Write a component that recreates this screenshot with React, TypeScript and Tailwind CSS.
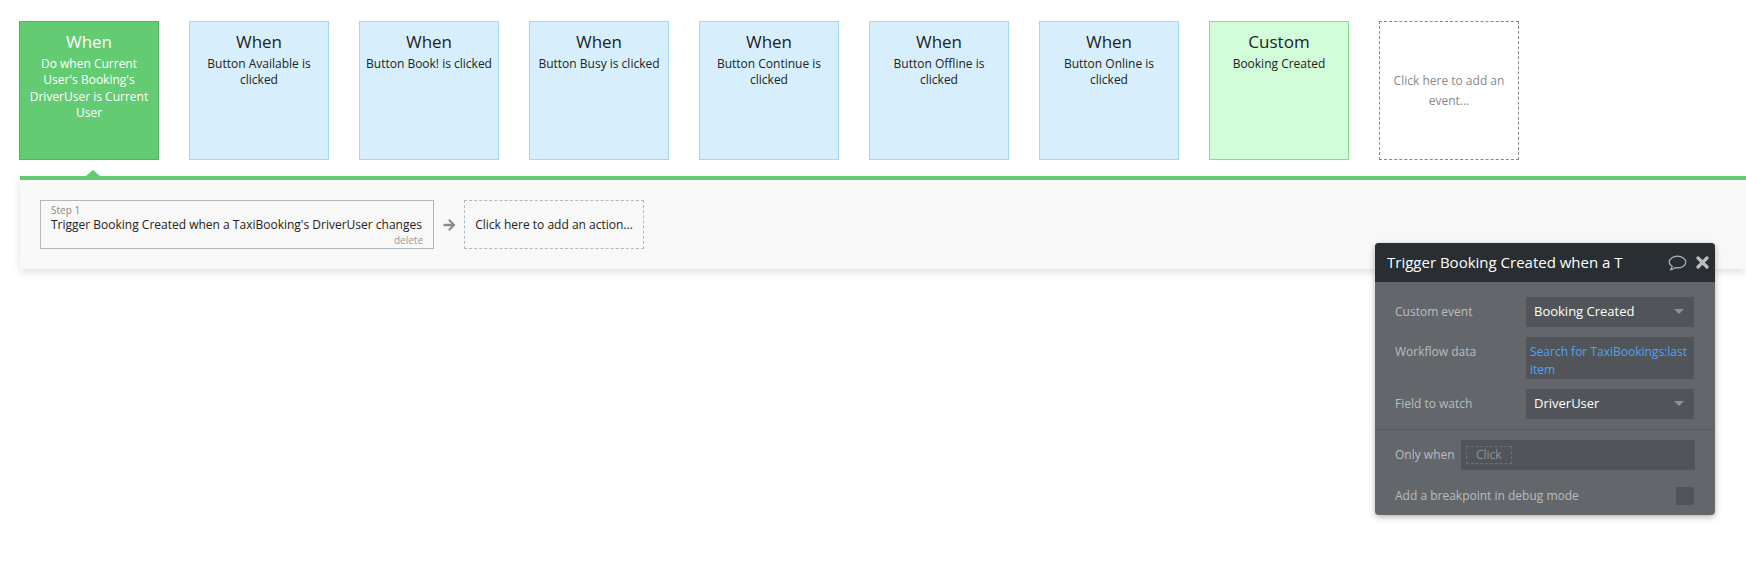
import React from 'react';

type EventBox = {
  kind: 'active' | 'button' | 'custom';
  title: string;
  text: string;
};

const events: EventBox[] = [
  { kind: 'active', title: 'When', text: "Do when Current User's Booking's DriverUser is Current User" },
  { kind: 'button', title: 'When', text: 'Button Available is clicked' },
  { kind: 'button', title: 'When', text: 'Button Book! is clicked' },
  { kind: 'button', title: 'When', text: 'Button Busy is clicked' },
  { kind: 'button', title: 'When', text: 'Button Continue is clicked' },
  { kind: 'button', title: 'When', text: 'Button Offline is clicked' },
  { kind: 'button', title: 'When', text: 'Button Online is clicked' },
  { kind: 'custom', title: 'Custom', text: 'Booking Created' },
];

const boxStyles: Record<EventBox['kind'], string> = {
  active: 'bg-[#63cb72] border-[#4fb45e] text-white',
  button: 'bg-[#d7effc] border-[#9fd7f8] text-[#222]',
  custom: 'bg-[#d1fdd8] border-[#80dd8c] text-[#222]',
};

const Caret = () => (
  <svg width="10" height="6" viewBox="0 0 10 6" className="shrink-0">
    <path d="M0 0 L10 0 L5 5 Z" fill="#8c9195" />
  </svg>
);

const ArrowRight = () => (
  <svg width="13" height="12" viewBox="0 0 448 448" className="shrink-0">
    <path
      fill="#8a8a8a"
      d="M190 30 L222 0 L448 224 L222 448 L190 418 C178 406 178 386 190 374 L292 272 L32 272 C14 272 0 258 0 240 L0 208 C0 190 14 176 32 176 L292 176 L190 74 C178 62 178 42 190 30 Z"
    />
  </svg>
);

const CommentIcon = () => (
  <svg width="19" height="16" viewBox="0 0 19 16" className="shrink-0">
    <path
      d="M9.5 1.2 C4.9 1.2 1.2 3.9 1.2 7 C1.2 8.8 2.4 10.3 4.2 11.3 C4 12.6 3.3 13.8 2.4 14.8 C4.3 14.6 5.9 13.8 7 12.7 C7.8 12.8 8.6 12.9 9.5 12.9 C14.1 12.9 17.8 10.2 17.8 7 C17.8 3.9 14.1 1.2 9.5 1.2 Z"
      fill="none"
      stroke="#aeb3b7"
      strokeWidth="1.2"
      strokeLinejoin="round"
    />
  </svg>
);

const CloseIcon = () => (
  <svg width="13" height="13" viewBox="0 0 13 13" className="shrink-0">
    <path d="M2 2 L11 11 M11 2 L2 11" stroke="#bcc0c3" strokeWidth="3.2" strokeLinecap="round" />
  </svg>
);

export default function App() {
  return (
    <div
      className="relative w-[1746px] h-[577px] bg-white overflow-hidden text-[#333]"
      style={{ fontFamily: '"Open Sans", "Liberation Sans", sans-serif' }}
    >
      {/* event row */}
      <div className="flex gap-[30px] pl-[19px] pt-[21px]">
        {events.map((e, i) => (
          <div
            key={i}
            className={`w-[140px] h-[139px] border px-[6px] pt-[7px] text-center ${boxStyles[e.kind]}`}
          >
            <div className="text-[17px] leading-[26px]">{e.title}</div>
            <div className="text-[12px] leading-[16.3px] mt-[1px]">{e.text}</div>
          </div>
        ))}
        <div className="w-[140px] h-[139px] border border-dashed border-[#888] flex items-center justify-center px-[12px] text-center">
          <div className="text-[12px] leading-[20px] text-[#888]">Click here to add an event...</div>
        </div>
      </div>

      {/* action panel */}
      <div className="relative ml-[20px] mt-[16px] h-[93px] border-t-4 border-[#62cb71] bg-[#f8f8f8] shadow-[0_3px_8px_rgba(0,0,0,0.13)]">
        <div className="absolute left-[66px] -top-[10px] w-0 h-0 border-l-[7px] border-r-[7px] border-b-[6px] border-l-transparent border-r-transparent border-b-[#62cb71]" />
        <div className="flex items-center pl-[20px] pt-[20px]">
          <div className="w-[394px] h-[49px] border border-[#b0b8c0] px-[10px] pt-[3px] bg-[#f8f8f8]">
            <div className="text-[10px] leading-[12px] text-[#888]">Step 1</div>
            <div className="text-[12px] leading-[18px] text-[#222] whitespace-nowrap">
              Trigger Booking Created when a TaxiBooking's DriverUser changes
            </div>
            <div className="text-[10px] leading-[12px] text-[#999] text-right">delete</div>
          </div>
          <div className="w-[30px] flex justify-center">
            <ArrowRight />
          </div>
          <div className="w-[180px] h-[49px] border border-dashed border-[#b5b9bd] flex items-center justify-center">
            <span className="text-[12px] text-[#222]">Click here to add an action...</span>
          </div>
        </div>
      </div>

      {/* property editor window */}
      <div className="absolute left-[1375px] top-[243px] w-[340px] rounded-[4px] bg-[#63676b] shadow-[0_2px_6px_rgba(0,0,0,0.3)] overflow-hidden">
        <div className="h-[39px] bg-[#282e31] flex items-center pl-[12px] pr-[6px]">
          <div className="whitespace-nowrap text-[15px] text-white">Trigger Booking Created when a T</div>
          <div className="flex-1" />
          <div className="flex items-center gap-[9px]">
            <CommentIcon />
            <CloseIcon />
          </div>
        </div>

        <div className="px-[20px] pt-[15px] pb-[10px] flex flex-col gap-[10px]">
          <div className="flex items-center">
            <div className="w-[131px] text-[12px] text-[#b9bcbf]">Custom event</div>
            <div className="w-[168px] h-[30px] bg-[#515559] flex items-center pl-[8px] pr-[10px]">
              <span className="flex-1 text-[13px] text-white">Booking Created</span>
              <Caret />
            </div>
          </div>
          <div className="flex items-start">
            <div className="w-[131px] pt-[6px] text-[12px] leading-[18px] text-[#b9bcbf]">Workflow data</div>
            <div className="w-[168px] h-[42px] bg-[#515559] pl-[4px] pt-[6px] text-[12px] leading-[18px] text-[#4fa3f5]">
              Search for TaxiBookings:last item
            </div>
          </div>
          <div className="flex items-center">
            <div className="w-[131px] text-[12px] text-[#b9bcbf]">Field to watch</div>
            <div className="w-[168px] h-[30px] bg-[#515559] flex items-center pl-[8px] pr-[10px]">
              <span className="flex-1 text-[13px] text-white">DriverUser</span>
              <Caret />
            </div>
          </div>
        </div>

        <div className="border-t border-[#575b5f]" />

        <div className="px-[20px] pt-[10px] pb-[10px] flex flex-col gap-[17px]">
          <div className="flex items-center">
            <div className="w-[66px] text-[12px] text-[#b9bcbf]">Only when</div>
            <div className="w-[234px] h-[30px] bg-[#515559] flex items-center pl-[5px]">
              <span className="border border-dashed border-[#6b7074] px-[9px] h-[18px] flex items-center text-[12px] text-[#8f9498]">
                Click
              </span>
            </div>
          </div>
          <div className="flex items-center">
            <div className="flex-1 text-[12px] text-[#b9bcbf]">Add a breakpoint in debug mode</div>
            <div className="w-[18px] h-[18px] bg-[#515559] mr-[1px]" />
          </div>
        </div>
      </div>
    </div>
  );
}
